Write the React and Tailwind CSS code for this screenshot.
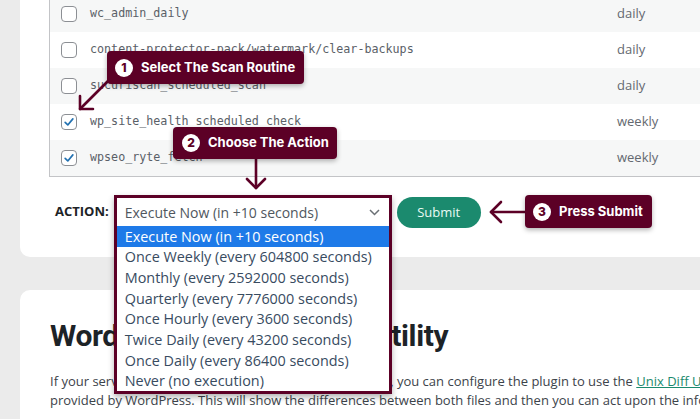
import React from "react";

const MAROON = "#5c0026";

function Checkbox({ checked }) {
  return (
    <div className="w-[16px] h-[16px] rounded-[4px] border border-[#8c8f94] bg-white flex items-center justify-center">
      {checked && (
        <svg width="14" height="14" viewBox="0 0 20 20">
          <path d="M4.5 10.5 L8.3 14.2 L15.5 5.5" fill="none" stroke="#2271b1" strokeWidth="2.4" strokeLinecap="round" strokeLinejoin="round" />
        </svg>
      )}
    </div>
  );
}

const rows = [
  { name: "wc_admin_daily", freq: "daily", checked: false },
  { name: "content-protector-pack/watermark/clear-backups", freq: "daily", checked: false },
  { name: "sucuriscan_scheduled_scan", freq: "daily", checked: false },
  { name: "wp_site_health_scheduled_check", freq: "weekly", checked: true },
  { name: "wpseo_ryte_fetch", freq: "weekly", checked: true },
];

const options = [
  "Execute Now (in +10 seconds)",
  "Once Weekly (every 604800 seconds)",
  "Monthly (every 2592000 seconds)",
  "Quarterly (every 7776000 seconds)",
  "Once Hourly (every 3600 seconds)",
  "Twice Daily (every 43200 seconds)",
  "Once Daily (every 86400 seconds)",
  "Never (no execution)",
];

function Badge({ n, text, className }) {
  return (
    <div
      className={`absolute flex items-center rounded-[4px] bg-[#5c0026] shadow-[0_2px_5px_rgba(0,0,0,0.3)] font-['Inter',sans-serif] ${className}`}
    >
      <div className="w-[18px] h-[18px] rounded-full bg-white flex items-center justify-center text-[12px] font-extrabold text-[#5c0026] leading-none">
        {n}
      </div>
      <span className="ml-[8px] text-[13px] font-bold text-white whitespace-nowrap">{text}</span>
    </div>
  );
}

export default function App() {
  return (
    <div className="relative w-[700px] h-[419px] overflow-hidden bg-[#ebebeb] font-['Open_Sans',sans-serif]">
      {/* Card 1 */}
      <div className="ml-[20px] w-[740px] bg-white rounded-bl-[10px] pl-[29px] pb-[29px]">
        <div className="-mt-[4px] border-l border-b border-[#c3c4c7]">
          {rows.map((r, i) => (
            <div
              key={r.name}
              className={`flex items-center h-[36px] ${i % 2 === 0 ? "bg-[#f6f7f7]" : "bg-white"}`}
            >
              <div className="w-[40px] pl-[11px]">
                <Checkbox checked={r.checked} />
              </div>
              <div className="w-[527px] font-['DejaVu_Sans_Mono',monospace] text-[11.7px] text-[#5a6067] whitespace-nowrap">
                {r.name}
              </div>
              <div className="text-[13px] text-[#646970]">{r.freq}</div>
            </div>
          ))}
        </div>

        {/* Action row */}
        <div className="mt-[18px] ml-[6px] flex items-start h-[33px]">
          <div className="h-[33px] flex items-center text-[13px] font-bold text-[#1d2327]">ACTION:</div>
          <div className="relative ml-[5px] w-[278px] h-[33px]">
            <div className="absolute left-0 top-0 w-[278px] h-[199px] border-[3px] border-[#5c0026] bg-white shadow-[0_3px_6px_rgba(0,0,0,0.3)] z-20">
              <div className="h-[28px] flex items-center justify-between pl-[8px] pr-[9px]">
                <span className="text-[14px] text-[#50575e]">Execute Now (in +10 seconds)</span>
                <svg width="11" height="7" viewBox="0 0 11 7">
                  <path d="M1 1 L5.5 5.5 L10 1" fill="none" stroke="#6b7075" strokeWidth="1.5" />
                </svg>
              </div>
              <div className="flex flex-col">
                {options.map((o, i) => (
                  <div
                    key={o}
                    className={`h-[20.7px] flex items-center pl-[8px] text-[14.4px] whitespace-nowrap ${
                      i === 0 ? "bg-[#1e7ae8] text-white" : "text-[#384b5f]"
                    }`}
                  >
                    {o}
                  </div>
                ))}
              </div>
            </div>
          </div>
          <button className="ml-[5px] mt-[2px] w-[84px] h-[31px] rounded-full bg-[#1b8a6e] text-[13px] font-medium text-[#eafaf4]">
            Submit
          </button>
        </div>
      </div>

      {/* Card 2 */}
      <div className="mt-[33px] ml-[20px] w-[1100px] h-[200px] bg-white rounded-tl-[10px] pl-[30px] pt-[28px]">
        <h2 className="font-['Roboto',sans-serif] text-[30px] leading-[36px] font-bold tracking-[-0.4px] text-[#1d2327] whitespace-nowrap">
          WordPress Integrity Diff Utility
        </h2>
        <p className="mt-[18px] text-[13px] leading-[19px] text-[#3c434a] whitespace-nowrap">
          <span className="block">
            If your server allows the execution of system commands, you can configure the plugin to use the{" "}
            <span className="text-[#1b8a6e] underline">Unix Diff Utility</span> to compare the actual content of the file installed in the website and the original file
          </span>
          <span className="block">
            provided by WordPress. This will show the differences between both files and then you can act upon the information provided.
          </span>
        </p>
      </div>

      {/* Arrows */}
      <svg className="absolute left-0 top-0 z-30 pointer-events-none" width="700" height="419" viewBox="0 0 700 419">
        <g fill="none" stroke={MAROON} strokeWidth="2.6" strokeLinecap="round" strokeLinejoin="round">
          <path d="M108 81 L80 109" />
          <path d="M93 109 L80 109 L80 96" />
          <path d="M256 158 L256 188" />
          <path d="M247 179 L256 188 L265 179" />
          <path d="M526 212 L491 212" />
          <path d="M501 202 L491 212 L501 222" />
        </g>
      </svg>

      <Badge n="1" text="Select The Scan Routine" className="z-40 left-[107px] top-[51px] w-[197px] h-[33px] pl-[8px]" />
      <Badge n="2" text="Choose The Action" className="z-40 left-[173px] top-[127px] w-[164px] h-[32px] pl-[9px]" />
      <Badge n="3" text="Press Submit" className="z-40 left-[525px] top-[195px] w-[127px] h-[33px] pl-[8px]" />
    </div>
  );
}
